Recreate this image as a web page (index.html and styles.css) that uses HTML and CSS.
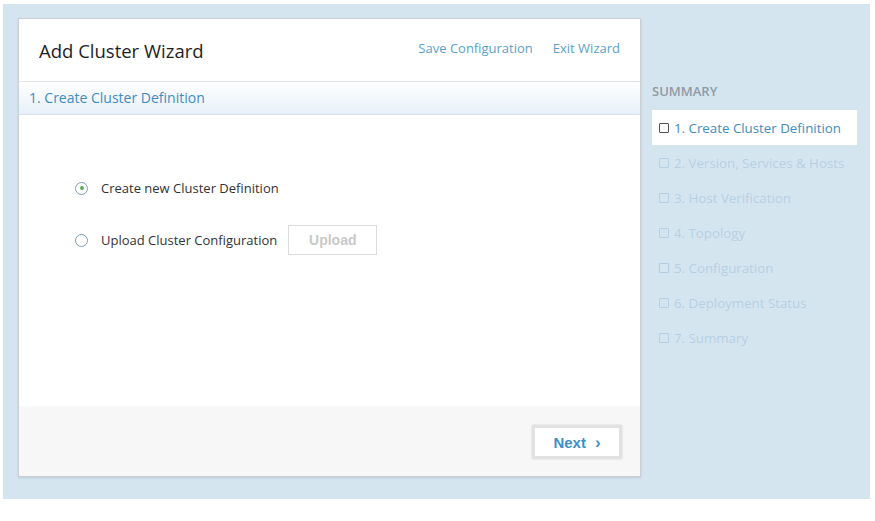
FILE: index.html
```html
<!DOCTYPE html>
<html>
<head>
<meta charset="utf-8">
<link rel="stylesheet" href="styles.css">
</head>
<body>
<div class="page">
  <div class="card">
    <div class="card-header">
      <h1 class="title">Add Cluster Wizard</h1>
      <div class="header-links">
        <a class="link">Save Configuration</a>
        <a class="link">Exit Wizard</a>
      </div>
    </div>
    <div class="step-bar">1. Create Cluster Definition</div>
    <div class="card-body">
      <div class="option">
        <span class="radio checked"></span>
        <span class="option-label">Create new Cluster Definition</span>
      </div>
      <div class="option">
        <span class="radio"></span>
        <span class="option-label">Upload Cluster Configuration</span>
        <span class="upload-btn">Upload</span>
      </div>
    </div>
    <div class="card-footer">
      <span class="next-btn">Next <span class="chev">&#8250;</span></span>
    </div>
  </div>
  <div class="sidebar">
    <div class="sidebar-title">SUMMARY</div>
    <ul class="steps">
      <li class="step active"><span class="box"></span>1. Create Cluster Definition</li>
      <li class="step"><span class="box"></span>2. Version, Services &amp; Hosts</li>
      <li class="step"><span class="box"></span>3. Host Verification</li>
      <li class="step"><span class="box"></span>4. Topology</li>
      <li class="step"><span class="box"></span>5. Configuration</li>
      <li class="step"><span class="box"></span>6. Deployment Status</li>
      <li class="step"><span class="box"></span>7. Summary</li>
    </ul>
  </div>
</div>
</body>
</html>
```
FILE: styles.css
```css
* { box-sizing: border-box; }
html, body { margin: 0; padding: 0; background: #fff; }
body { font-family: "Open Sans", "Noto Sans", sans-serif; }

.page {
  margin: 4px 0 0 3px;
  width: 867px;
  height: 495px;
  background: #d5e5f0;
  display: flex;
  align-items: flex-start;
  padding: 14px 0 0 15px;
  gap: 11px;
}

.card {
  width: 623px;
  height: 459px;
  background: #fff;
  border: 1px solid #c9cfd4;
  box-shadow: 0 1px 2px rgba(0,0,0,0.12);
  display: flex;
  flex-direction: column;
}

.card-header {
  height: 63px;
  display: flex;
  align-items: flex-start;
  justify-content: space-between;
  padding: 0 20px 0 20px;
  border-bottom: 1px solid #e1e6ea;
}
.title {
  margin: 20px 0 0 0;
  font-size: 18.5px;
  font-weight: 500;
  color: #1e1e1e;
  line-height: 24px;
}
.header-links {
  display: flex;
  gap: 20px;
  margin-top: 20px;
}
.link {
  font-size: 13px;
  color: #5b9fcb;
  line-height: 18px;
}

.step-bar {
  height: 33px;
  line-height: 31px;
  padding-left: 10px;
  font-size: 14px;
  color: #3f8cc1;
  background: linear-gradient(to bottom, #ffffff 0%, #e6f0f8 100%);
  border-bottom: 1px solid #d7e1e9;
}

.card-body {
  flex: 1;
  padding: 58px 0 0 55px;
  display: flex;
  flex-direction: column;
  gap: 22px;
}
.option {
  display: flex;
  align-items: center;
  height: 30px;
}
.radio {
  width: 13px;
  height: 13px;
  border: 1px solid #7f9fb9;
  border-radius: 50%;
  background: #fff;
  margin-right: 13px;
  margin-left: 1px;
  position: relative;
}
.radio.checked::after {
  content: "";
  position: absolute;
  left: 3.5px;
  top: 3.5px;
  width: 4px;
  height: 4px;
  border-radius: 50%;
  background: #5cae5c;
}
.option-label {
  font-size: 13px;
  color: #333;
}
.upload-btn {
  margin-left: 11px;
  width: 89px;
  height: 30px;
  border: 1px solid #dcdcdc;
  display: flex;
  align-items: center;
  justify-content: center;
  font-family: "Liberation Sans", Arial, sans-serif;
  font-weight: bold;
  font-size: 14px;
  color: #c9c9c9;
}

.card-footer {
  height: 70px;
  background: #f7f7f7;
  display: flex;
  justify-content: flex-end;
  align-items: flex-start;
  padding: 19px 18px 0 0;
}
.next-btn {
  width: 90px;
  height: 34px;
  background: #fff;
  border: 3px solid #e2e2e2;
  box-shadow: 0 0 2px rgba(0,0,0,0.15);
  display: flex;
  align-items: center;
  justify-content: center;
  gap: 9px;
  font-family: "Liberation Sans", Arial, sans-serif;
  font-weight: bold;
  font-size: 15px;
  color: #3d8fc6;
}
.chev { font-size: 17px; line-height: 1; }

.sidebar {
  width: 205px;
  padding-top: 64px;
}
.sidebar-title {
  font-size: 13px;
  font-weight: 600;
  color: #8f9ba4;
  line-height: 18px;
  margin-bottom: 10px;
}
.steps {
  list-style: none;
  margin: 0;
  padding: 0;
}
.step {
  height: 35px;
  display: flex;
  align-items: center;
  padding-left: 7px;
  font-size: 13.3px;
  color: #b5d0e3;
}
.step.active {
  background: #fff;
  color: #3f8cc1;
}
.box {
  width: 10px;
  height: 10px;
  border: 1px solid currentColor;
  border-radius: 1px;
  margin-right: 5px;
}
.step.active .box { border-color: #555; }
```
